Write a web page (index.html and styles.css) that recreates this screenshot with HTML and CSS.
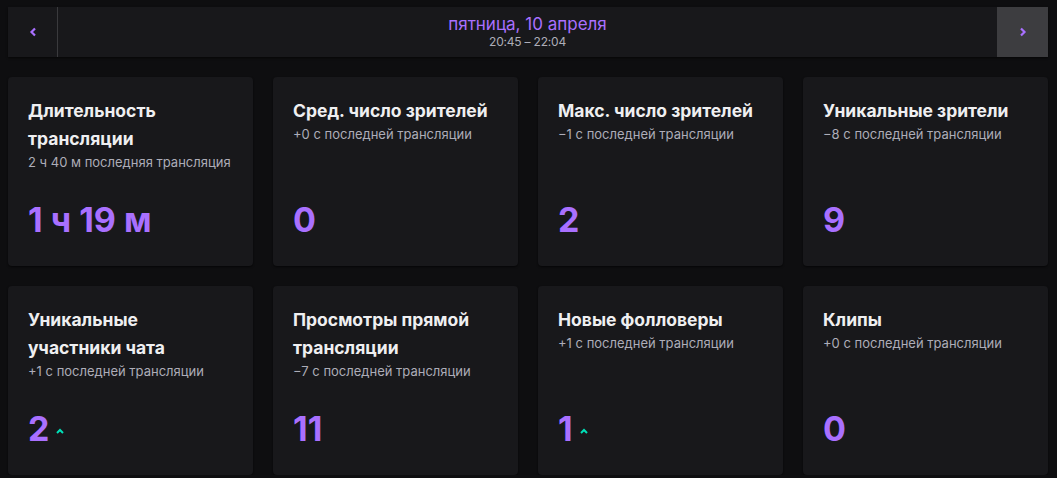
FILE: index.html
```html
<!DOCTYPE html>
<html lang="ru">
<head>
<meta charset="utf-8">
<link rel="stylesheet" href="styles.css">
</head>
<body>
<div class="page">
  <div class="nav">
    <button class="nav-btn nav-prev" aria-label="prev">
      <svg width="8" height="10" viewBox="0 0 8 10"><path d="M6 1.5 L2.5 5 L6 8.5" fill="none" stroke="#a970ff" stroke-width="2.2" stroke-linejoin="miter"/></svg>
    </button>
    <div class="nav-center">
      <div class="nav-date">пятница, 10 апреля</div>
      <div class="nav-time">20:45 – 22:04</div>
    </div>
    <button class="nav-btn nav-next" aria-label="next">
      <svg width="8" height="10" viewBox="0 0 8 10"><path d="M2 1.5 L5.5 5 L2 8.5" fill="none" stroke="#a970ff" stroke-width="2.2" stroke-linejoin="miter"/></svg>
    </button>
  </div>

  <div class="grid">
    <div class="card">
      <div class="card-title">Длительность трансляции</div>
      <div class="card-sub">2 ч 40 м последняя трансляция</div>
      <div class="card-value">1 ч 19 м</div>
    </div>
    <div class="card">
      <div class="card-title">Сред. число зрителей</div>
      <div class="card-sub">+0 с последней трансляции</div>
      <div class="card-value">0</div>
    </div>
    <div class="card">
      <div class="card-title">Макс. число зрителей</div>
      <div class="card-sub">−1 с последней трансляции</div>
      <div class="card-value">2</div>
    </div>
    <div class="card">
      <div class="card-title">Уникальные зрители</div>
      <div class="card-sub">−8 с последней трансляции</div>
      <div class="card-value">9</div>
    </div>
    <div class="card">
      <div class="card-title">Уникальные участники чата</div>
      <div class="card-sub">+1 с последней трансляции</div>
      <div class="card-value">2<svg class="up" width="8" height="6" viewBox="0 0 8 6"><path d="M1 5 L4 2 L7 5" fill="none" stroke="#00e0b8" stroke-width="2"/></svg></div>
    </div>
    <div class="card">
      <div class="card-title">Просмотры прямой трансляции</div>
      <div class="card-sub">−7 с последней трансляции</div>
      <div class="card-value">11</div>
    </div>
    <div class="card">
      <div class="card-title">Новые фолловеры</div>
      <div class="card-sub">+1 с последней трансляции</div>
      <div class="card-value">1<svg class="up" width="8" height="6" viewBox="0 0 8 6"><path d="M1 5 L4 2 L7 5" fill="none" stroke="#00e0b8" stroke-width="2"/></svg></div>
    </div>
    <div class="card">
      <div class="card-title">Клипы</div>
      <div class="card-sub">+0 с последней трансляции</div>
      <div class="card-value">0</div>
    </div>
  </div>
</div>
</body>
</html>
```

FILE: styles.css
```css
html, body {
  margin: 0;
  padding: 0;
  background: #0e0e10;
  font-family: Inter, "Noto Sans", sans-serif;
  color: #efeff1;
}
.page {
  padding: 7px 9px 0 8px;
}
.nav {
  display: flex;
  height: 50px;
  background: #18181b;
  box-shadow: 0 1px 2px rgba(0,0,0,0.6);
}
.nav-btn {
  width: 50px;
  border: 0;
  padding: 0;
  margin: 0;
  background: transparent;
  display: flex;
  align-items: center;
  justify-content: center;
  cursor: pointer;
}
.nav-prev {
  border-right: 1px solid #3a3a3d;
}
.nav-next {
  width: 51px;
  background: #3d3d40;
}
.nav-center {
  flex: 1;
  display: flex;
  flex-direction: column;
  align-items: center;
  justify-content: center;
  padding-bottom: 2px;
}
.nav-date {
  color: #a970ff;
  font-size: 17px;
  line-height: 20px;
}
.nav-time {
  color: #adadb8;
  font-size: 12px;
  line-height: 15px;
  letter-spacing: -0.2px;
}
.grid {
  margin-top: 20px;
  display: grid;
  grid-template-columns: repeat(4, 1fr);
  grid-auto-rows: 189px;
  gap: 20px;
}
.card {
  background: #18181b;
  border-radius: 4px;
  padding: 20px 20px 26px;
  display: flex;
  flex-direction: column;
  box-shadow: 0 1px 2px rgba(0,0,0,0.6);
}
.card-title {
  font-size: 17.5px;
  font-weight: 700;
  line-height: 28px;
  color: #efeff1;
}
.card-sub {
  font-size: 13px;
  line-height: 18px;
  color: #adadb8;
  margin-top: 0;
}
.card-value {
  margin-top: auto;
  font-size: 34px;
  font-weight: 700;
  line-height: 40px;
  color: #a970ff;
  display: flex;
  align-items: center;
}
.up {
  margin-left: 7px;
  margin-top: 4px;
}
```
